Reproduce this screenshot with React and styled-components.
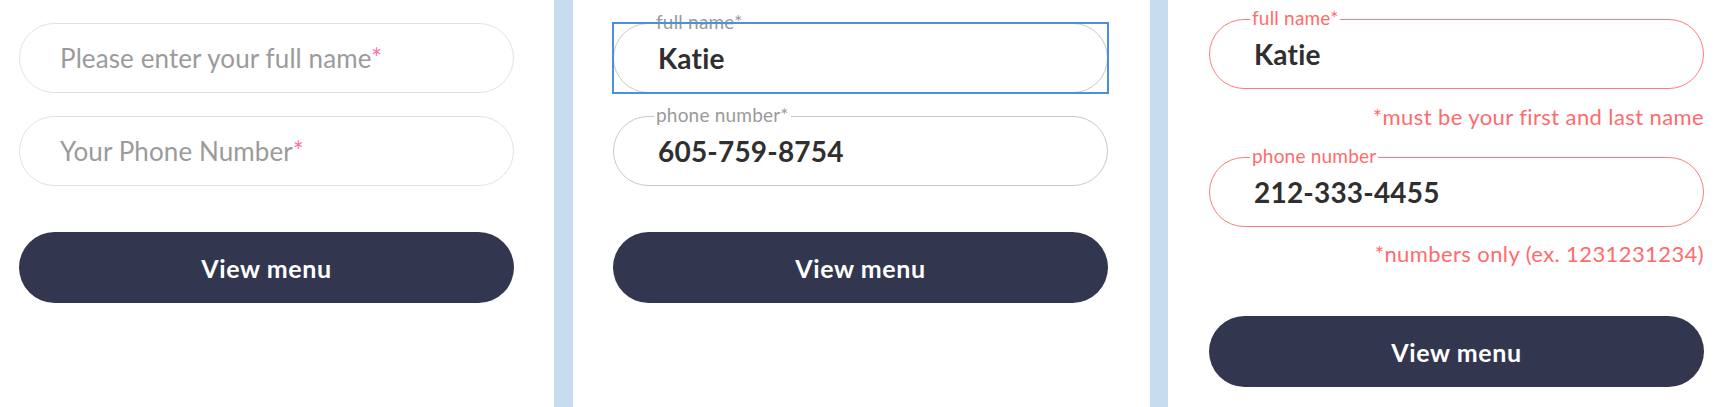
import * as React from 'react';
import styled, { createGlobalStyle, css } from 'styled-components';

const GlobalStyle = createGlobalStyle`
  html, body {
    margin: 0;
    padding: 0;
    background: #ffffff;
  }
  body {
    font-family: Lato, "Noto Sans", sans-serif;
  }
`;

const Screen = styled.div`
  display: flex;
  height: 407px;
  width: 1735px;
  overflow: hidden;
`;

const Panel = styled.div`
  box-sizing: border-box;
  width: ${(p) => p.$width}px;
  flex: ${(p) => (p.$width ? 'none' : '1')};
  padding-left: ${(p) => p.$inset}px;
  padding-top: ${(p) => p.$top}px;
  background: #ffffff;
`;

const Divider = styled.div`
  flex: none;
  width: ${(p) => p.$width}px;
  background: #c7dcef;
`;

const Form = styled.div`
  display: flex;
  flex-direction: column;
  width: 495px;
`;

const Field = styled.div`
  position: relative;
  box-sizing: border-box;
  height: 70px;
  border: 1.5px solid ${(p) => p.$tone};
  border-radius: 35px;
  display: flex;
  align-items: center;
  padding-left: 40px;
  margin-top: ${(p) => p.$gap || 0}px;

  ${(p) =>
    p.$focused &&
    css`
      &::after {
        content: '';
        position: absolute;
        left: -2px;
        top: -2px;
        right: -2px;
        bottom: -2px;
        border: 2px solid #4a90e2;
      }
    `}
`;

const Label = styled.span`
  position: absolute;
  left: 40px;
  top: -14px;
  padding: 0 2px;
  background: #ffffff;
  font-size: 19px;
  line-height: 24px;
  letter-spacing: 0.2px;
  color: ${(p) => p.$color};
`;

const Placeholder = styled.span`
  font-size: 26px;
  color: #9b9b9b;
  letter-spacing: 0.1px;
`;

const Star = styled.span`
  color: #ff6fae;
`;

const Value = styled.span`
  font-size: 28px;
  font-weight: 700;
  color: #2f2f2f;
  padding-left: 4px;
  letter-spacing: 0.2px;
`;

const ErrorText = styled.div`
  text-align: right;
  font-size: 22px;
  line-height: 24px;
  letter-spacing: 0.4px;
  color: #ff6b6b;
  margin-top: ${(p) => p.$gap}px;
`;

const MenuButton = styled.button`
  margin-top: ${(p) => p.$gap}px;
  height: 71px;
  width: 100%;
  border: none;
  border-radius: 36px;
  background: #32364f;
  color: #ffffff;
  font-family: Lato, "Noto Sans", sans-serif;
  font-size: 25px;
  font-weight: 700;
  letter-spacing: 0.6px;
  cursor: pointer;
`;

const App = () => (
  <Screen>
    <GlobalStyle />

    <Panel $width={554} $inset={19} $top={23}>
      <Form>
        <Field $tone="#e2e2e2">
          <Placeholder>
            Please enter your full name<Star>*</Star>
          </Placeholder>
        </Field>
        <Field $tone="#e2e2e2" $gap={23}>
          <Placeholder>
            Your Phone Number<Star>*</Star>
          </Placeholder>
        </Field>
        <MenuButton $gap={46}>View menu</MenuButton>
      </Form>
    </Panel>

    <Divider $width={19} />

    <Panel $width={577} $inset={40} $top={23}>
      <Form>
        <Field $tone="#c9c9c9" $focused>
          <Label $color="#9a9a9a">full name*</Label>
          <Value>Katie</Value>
        </Field>
        <Field $tone="#c9c9c9" $gap={23}>
          <Label $color="#9a9a9a">phone number*</Label>
          <Value>605-759-8754</Value>
        </Field>
        <MenuButton $gap={46}>View menu</MenuButton>
      </Form>
    </Panel>

    <Divider $width={18} />

    <Panel $inset={41} $top={19}>
      <Form>
        <Field $tone="#ff7b7b">
          <Label $color="#ff6b6b">full name*</Label>
          <Value>Katie</Value>
        </Field>
        <ErrorText $gap={16}>*must be your first and last name</ErrorText>
        <Field $tone="#ff7b7b" $gap={28}>
          <Label $color="#ff6b6b">phone number</Label>
          <Value>212-333-4455</Value>
        </Field>
        <ErrorText $gap={15}>*numbers only (ex. 1231231234)</ErrorText>
        <MenuButton $gap={50}>View menu</MenuButton>
      </Form>
    </Panel>
  </Screen>
);

export default App;
